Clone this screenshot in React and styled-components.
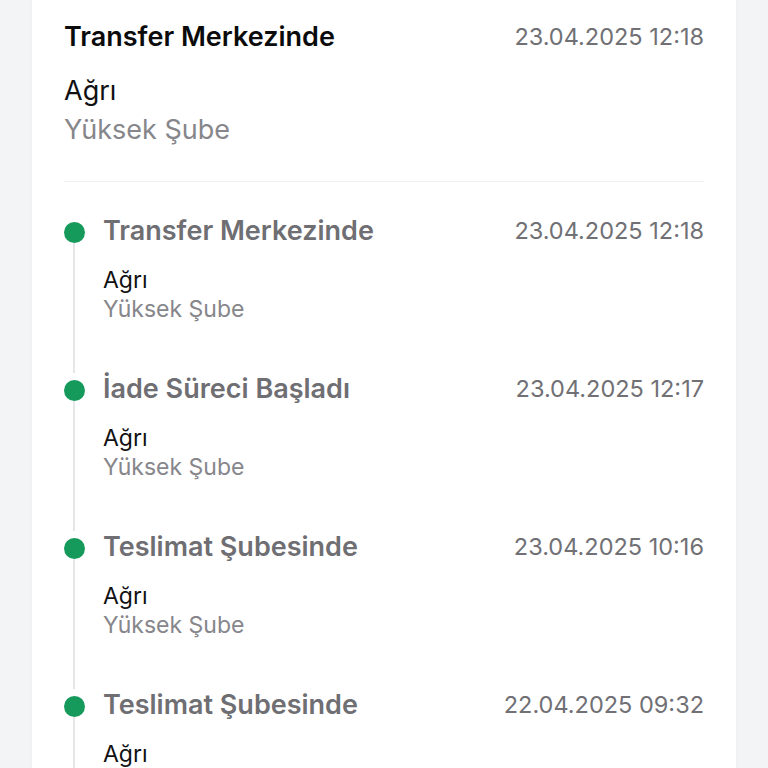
import React from "react";
import styled, { createGlobalStyle } from "styled-components";

const Global = createGlobalStyle`
  html, body { margin: 0; padding: 0; background: #f3f4f6; }
  body { font-family: Inter, "Noto Sans", "Liberation Sans", sans-serif; -webkit-font-smoothing: antialiased; }
`;

const Page = styled.div`
  padding: 0 32px;
  min-height: 768px;
  overflow: hidden;
`;

const Card = styled.div`
  background: #ffffff;
  padding: 21px 32px 40px;
  box-shadow: 0 0 4px rgba(0, 0, 0, 0.04);
`;

const Row = styled.div`
  display: flex;
  justify-content: space-between;
  align-items: center;
`;

const Title = styled.div`
  font-size: 27px;
  line-height: 32px;
  font-weight: 600;
  color: ${(p) => (p.$muted ? "#6e6e73" : "#0b0b0c")};
`;

const DateText = styled.div`
  font-size: 23.5px;
  line-height: 32px;
  color: #707075;
`;

const City = styled.div`
  font-size: ${(p) => (p.$small ? "23px" : "27px")};
  line-height: ${(p) => (p.$small ? "29px" : "39px")};
  color: #111113;
`;

const Branch = styled.div`
  font-size: ${(p) => (p.$small ? "23px" : "27px")};
  line-height: ${(p) => (p.$small ? "29px" : "39px")};
  color: #86868b;
`;

const HeaderInfo = styled.div`
  margin-top: 18px;
`;

const Divider = styled.hr`
  border: none;
  border-top: 1px solid #f0f0f2;
  margin: 32px 0 33px;
`;

const Item = styled.div`
  display: grid;
  grid-template-columns: 39px 1fr;
`;

const Rail = styled.div`
  display: flex;
  flex-direction: column;
  align-items: flex-start;
`;

const Dot = styled.div`
  width: 21px;
  height: 21px;
  border-radius: 50%;
  background: #159a5b;
  margin-top: 7px;
`;

const Line = styled.div`
  flex: 1;
  width: 2px;
  margin-left: 9px;
  background: #e6e6e8;
`;

const Body = styled.div`
  padding-bottom: 49px;
`;

const Details = styled.div`
  margin-top: 19px;
`;

const events = [
  { title: "Transfer Merkezinde", date: "23.04.2025 12:18" },
  { title: "İade Süreci Başladı", date: "23.04.2025 12:17" },
  { title: "Teslimat Şubesinde", date: "23.04.2025 10:16" },
  { title: "Teslimat Şubesinde", date: "22.04.2025 09:32" },
];

export default function App() {
  return (
    <Page>
      <Global />
      <Card>
        <Row>
          <Title>Transfer Merkezinde</Title>
          <DateText>23.04.2025 12:18</DateText>
        </Row>
        <HeaderInfo>
          <City>Ağrı</City>
          <Branch>Yüksek Şube</Branch>
        </HeaderInfo>
        <Divider />
        {events.map((e, i) => (
          <Item key={i}>
            <Rail>
              <Dot />
              <Line />
            </Rail>
            <Body>
              <Row>
                <Title $muted>{e.title}</Title>
                <DateText>{e.date}</DateText>
              </Row>
              <Details>
                <City $small>Ağrı</City>
                <Branch $small>Yüksek Şube</Branch>
              </Details>
            </Body>
          </Item>
        ))}
      </Card>
    </Page>
  );
}
